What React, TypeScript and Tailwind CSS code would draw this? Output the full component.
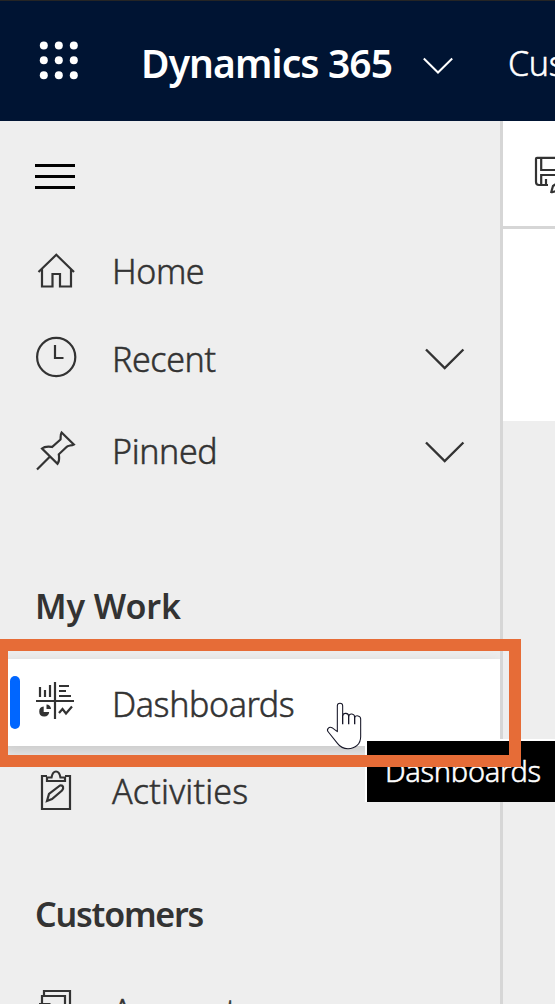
import type { ReactNode } from 'react';

const stroke = { fill: 'none', stroke: '#333333', strokeWidth: 2.2 } as const;

function Icon({ children, y, h }: { children: ReactNode; y: number; h: number }) {
  return (
    <svg width={112} height={h} viewBox={`0 ${y} 112 ${h}`} className="block shrink-0">
      <g {...stroke}>{children}</g>
    </svg>
  );
}

function Chevron({ className }: { className: string }) {
  return (
    <svg width={40} height={24} viewBox="0 0 40 24" className={className}>
      <path d="M1 1.5 19.7 20 38.4 1.5" {...stroke} strokeWidth={2.4} />
    </svg>
  );
}

function Header() {
  return (
    <header className="flex h-[121px] shrink-0 overflow-hidden border-t border-[#252525] bg-[#001433] text-white">
      <svg width={141} height={120} viewBox="0 1 141 120" className="block shrink-0" fill="#fff">
        {[45.5, 60.3, 75.3].map((cy) =>
          [43.8, 58.8, 73.8].map((cx) => <circle key={`${cx}-${cy}`} cx={cx} cy={cy} r={4} />),
        )}
      </svg>
      <div className="w-[280px] shrink-0 pt-[38px] text-[39px] leading-[48px] font-semibold tracking-[-0.9px] whitespace-nowrap">
        Dynamics 365
      </div>
      <svg width={87} height={120} viewBox="421 1 87 120" className="block shrink-0">
        <path d="M423.8 58.5 438 72.5 452.2 58.5" fill="none" stroke="#fff" strokeWidth={2} />
      </svg>
      <div className="shrink-0 pt-[38px] text-[34px] leading-[48px] font-light tracking-[-0.4px] [-webkit-text-stroke:0.5px]">
        Cus
      </div>
    </header>
  );
}

function Sidebar() {
  return (
    <nav className="flex w-[503px] shrink-0 flex-col overflow-hidden border-r-3 border-[#d6d6d6] bg-[#eeeeee] text-[34px] leading-[48px] font-light text-[#333333] [-webkit-text-stroke:0.5px]">
      <div className="flex h-[107px] shrink-0 flex-col gap-2 pt-[43px] pl-[35px]">
        <div className="h-[3px] w-10 bg-black" />
        <div className="h-[3px] w-10 bg-black" />
        <div className="h-[3px] w-10 bg-black" />
      </div>
      <div className="flex h-[88px] shrink-0">
        <Icon y={228} h={88}>
          <path d="M38.5 272 56.3 254.8 74 272M42 269V286.5H52.5V274H60V286.5H71V269" />
        </Icon>
        <div className="pt-[19px] tracking-[-0.4px]">Home</div>
      </div>
      <div className="flex h-[88px] shrink-0">
        <Icon y={316} h={88}>
          <circle cx={56.2} cy={357} r={19.1} />
          <path d="M55 345V358H63.5" />
        </Icon>
        <div className="flex-1 pt-[19px] tracking-[-0.4px]">Recent</div>
        <Chevron className="mt-[32px] mr-[35px] block" />
      </div>
      <div className="flex h-[155px] shrink-0">
        <Icon y={404} h={155}>
          <path d="M37 469.5 49.5 457M61.6 432.5 73.8 444.5C71 446 68 445 66.5 447L58.8 454.3C59.3 459 60 460.5 57.5 463.8L42 448.5C45 446 48 446.5 52 447L60.5 439.5C61 437 60 435 61.6 432.5Z" />
        </Icon>
        <div className="flex-1 pt-[23px] tracking-[-0.4px]">Pinned</div>
        <Chevron className="mt-[37px] mr-[35px] block" />
      </div>
      <div className="h-[100px] shrink-0 pt-[23px] pl-[35px] font-semibold tracking-[-0.1px] [-webkit-text-stroke:0]">
        My Work
      </div>
      <div className="relative flex h-[87px] shrink-0 bg-white shadow-[0_6px_16px_rgba(0,0,0,0.17)]">
        <div className="absolute top-[17px] left-[10px] h-[53px] w-[10px] rounded-[5px] bg-[#0066ff]" />
        <Icon y={659} h={87}>
          <path d="M55 682V719M36 701H74M40 687V697M45 690V697M50 685V697M59 686H69M59 691H66M59 696H71" />
          <path d="M59 713 62.5 709 66 713.5 72 706.5" />
          <path d="M43.7 706.5V712H49.2A5 5 0 1 1 43.7 706.5ZM46.5 704.5A4.5 4.5 0 0 1 51 709H46.5Z" fill="#333333" stroke="none" />
        </Icon>
        <div className="pt-[21px] tracking-[-0.4px]">Dashboards</div>
      </div>
      <div className="flex h-[121px] shrink-0">
        <Icon y={746} h={121}>
          <path d="M47 776H42V809H70V776H65" />
          <path d="M47 777.5H51.5C53 769.5 59 769.5 60.5 777.5H65V781H47Z" />
          <path d="M47 801 49 794 60 785.5C63.5 785 64 788 62 790.5L52 799Z" />
        </Icon>
        <div className="pt-[21px] tracking-[0.2px]">Activities</div>
      </div>
      <div className="h-[115px] shrink-0 pt-[23px] pl-[35px] font-semibold tracking-[-1.2px] [-webkit-text-stroke:0]">
        Customers
      </div>
      <div className="flex h-[22px] shrink-0">
        <Icon y={982} h={22}>
          <path d="M44 996V991H70V1004M42 1004V996H65V1004M39 1004H50.5" />
        </Icon>
        <div className="pt-[5px]">Accounts</div>
      </div>
    </nav>
  );
}

function Content() {
  return (
    <main className="flex flex-1 flex-col overflow-hidden bg-[#eeeeee]">
      <div className="h-[108px] shrink-0 border-b-3 border-[#d6d6d6] bg-white">
        <svg width={52} height={105} viewBox="503 121 52 105" className="block">
          <path
            d="M560 157.8H537Q536 157.8 536 158.8V182Q536 185 539 185H548M541.2 158V170H560M560 175H541.2V184M546 179V185M551 193 553 186 560 181M551 192.5 556 191"
            {...stroke}
          />
        </svg>
      </div>
      <div className="h-[192px] shrink-0 bg-white" />
    </main>
  );
}

export default function App() {
  return (
    <div className="relative flex h-[1004px] w-[555px] flex-col overflow-hidden font-['Noto_Sans','Open_Sans',sans-serif]">
      <Header />
      <div className="flex min-h-0 flex-1">
        <Sidebar />
        <Content />
      </div>
      <div className="absolute top-[739px] left-[365px] h-[63px] w-[190px] border-t-2 border-l-2 border-white bg-black pt-[10px] pl-[18px] text-[29px] leading-10 font-light tracking-[-0.3px] whitespace-nowrap text-white [-webkit-text-stroke:0.5px]">
        Dashboards
      </div>
      <div className="absolute top-[639px] left-[-4px] h-[128px] w-[525px] border-12 border-[#e66c37]" />
      <svg width={60} height={60} viewBox="0 0 180 180" className="absolute top-[695px] left-[320px]">
        <path
          d="M52 110V32C52 22 68 22 68 32V62C70 52 86 53 86 64C88 54 104 55 104 67C107 60 122 61 122 72V125C122 147 106 161 84 161C68 161 59 154 53 146L25 111C18 103 27 94 36 98Z"
          fill="#fff"
          stroke="#171728"
          strokeWidth={3.2}
          strokeLinejoin="round"
        />
        <path d="M68 60V88M86 62V88M104 65V88" fill="none" stroke="#171728" strokeWidth={4} />
      </svg>
    </div>
  );
}
